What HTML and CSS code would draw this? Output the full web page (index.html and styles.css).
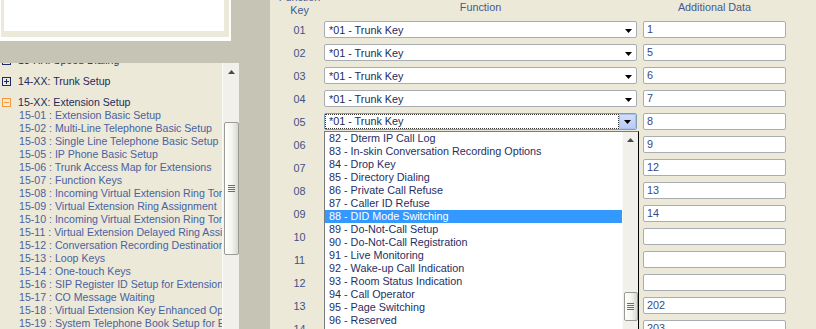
FILE: index.html
```html
<!DOCTYPE html>
<html>
<head>
<meta charset="utf-8">
<link rel="stylesheet" href="styles.css">
</head>
<body>
<div class="page">
  <div class="left">
    <div class="topbox"><div class="topbox-frame"><div class="topbox-inner"></div></div></div>
    <div class="tree">
      <div class="tree-list">
        <div class="tree-head"><svg class="ico" width="9" height="9" viewBox="0 0 9 9"><rect x=".5" y=".5" width="8" height="8" fill="none" stroke="#1c2a6b"/><path d="M2 4.5H7M4.5 2V7" stroke="#1c2a6b"/></svg><span>13-XX: Speed Dialing</span></div>
        <div class="tree-head"><svg class="ico" width="9" height="9" viewBox="0 0 9 9"><rect x=".5" y=".5" width="8" height="8" fill="none" stroke="#1c2a6b"/><path d="M2 4.5H7M4.5 2V7" stroke="#1c2a6b"/></svg><span>14-XX: Trunk Setup</span></div>
        <div class="tree-head"><svg class="ico" width="9" height="9" viewBox="0 0 9 9"><rect x=".5" y=".5" width="8" height="8" fill="none" stroke="#f29a3c"/><path d="M2 4.5H7" stroke="#f29a3c"/></svg><span>15-XX: Extension Setup</span></div>
        <div class="tree-item">15-01 : Extension Basic Setup</div>
        <div class="tree-item">15-02 : Multi-Line Telephone Basic Setup</div>
        <div class="tree-item">15-03 : Single Line Telephone Basic Setup</div>
        <div class="tree-item">15-05 : IP Phone Basic Setup</div>
        <div class="tree-item">15-06 : Trunk Access Map for Extensions</div>
        <div class="tree-item">15-07 : Function Keys</div>
        <div class="tree-item">15-08 : Incoming Virtual Extension Ring Tone Setup</div>
        <div class="tree-item">15-09 : Virtual Extension Ring Assignment</div>
        <div class="tree-item">15-10 : Incoming Virtual Extension Ring Tone Setup for Trunks</div>
        <div class="tree-item">15-11 : Virtual Extension Delayed Ring Assignment</div>
        <div class="tree-item">15-12 : Conversation Recording Destination for DSS</div>
        <div class="tree-item">15-13 : Loop Keys</div>
        <div class="tree-item">15-14 : One-touch Keys</div>
        <div class="tree-item">15-16 : SIP Register ID Setup for Extensions</div>
        <div class="tree-item">15-17 : CO Message Waiting</div>
        <div class="tree-item">15-18 : Virtual Extension Key Enhanced Options</div>
        <div class="tree-item">15-19 : System Telephone Book Setup for Extensions</div>
      </div>
      <div class="vscroll">
        <svg class="up" width="7" height="4" viewBox="0 0 7 4"><path d="M3.5 0L7 4H0Z" fill="#4a4a4a"/></svg>
        <div class="thumb tree-thumb"><div class="grip"><i></i><i></i><i></i><i></i></div></div>
      </div>
    </div>
  </div>

  <div class="main">
    <div class="hdr">
      <div class="key">Function<br>Key</div>
      <div class="fn">Function</div>
      <div class="ad">Additional Data</div>
    </div>

    <div class="row"><div class="key">01</div><div class="sel"><span class="txt">*01 - Trunk Key</span><svg class="arr" width="7" height="4" viewBox="0 0 7 4"><path d="M0 0H7L3.5 4Z" fill="#000"/></svg></div><div class="inp">1</div></div>
    <div class="row"><div class="key">02</div><div class="sel"><span class="txt">*01 - Trunk Key</span><svg class="arr" width="7" height="4" viewBox="0 0 7 4"><path d="M0 0H7L3.5 4Z" fill="#000"/></svg></div><div class="inp">5</div></div>
    <div class="row"><div class="key">03</div><div class="sel"><span class="txt">*01 - Trunk Key</span><svg class="arr" width="7" height="4" viewBox="0 0 7 4"><path d="M0 0H7L3.5 4Z" fill="#000"/></svg></div><div class="inp">6</div></div>
    <div class="row"><div class="key">04</div><div class="sel"><span class="txt">*01 - Trunk Key</span><svg class="arr" width="7" height="4" viewBox="0 0 7 4"><path d="M0 0H7L3.5 4Z" fill="#000"/></svg></div><div class="inp">7</div></div>
    <div class="row"><div class="key">05</div><div class="sel focus"><span class="ftxt">*01 - Trunk Key</span><span class="btn"><svg width="7" height="4" viewBox="0 0 7 4"><path d="M0 0H7L3.5 4Z" fill="#000"/></svg></span></div><div class="inp">8</div></div>
    <div class="row"><div class="key">06</div><div class="sel"></div><div class="inp">9</div></div>
    <div class="row"><div class="key">07</div><div class="sel"></div><div class="inp">12</div></div>
    <div class="row"><div class="key">08</div><div class="sel"></div><div class="inp">13</div></div>
    <div class="row"><div class="key">09</div><div class="sel"></div><div class="inp">14</div></div>
    <div class="row"><div class="key">10</div><div class="sel"></div><div class="inp"></div></div>
    <div class="row"><div class="key">11</div><div class="sel"></div><div class="inp"></div></div>
    <div class="row"><div class="key">12</div><div class="sel"></div><div class="inp"></div></div>
    <div class="row"><div class="key">13</div><div class="sel"></div><div class="inp">202</div></div>
    <div class="row"><div class="key">14</div><div class="sel"></div><div class="inp">203</div></div>

    <div class="dd">
      <div class="dd-list">
        <div class="dd-item">82 - Dterm IP Call Log</div>
        <div class="dd-item">83 - In-skin Conversation Recording Options</div>
        <div class="dd-item">84 - Drop Key</div>
        <div class="dd-item">85 - Directory Dialing</div>
        <div class="dd-item">86 - Private Call Refuse</div>
        <div class="dd-item">87 - Caller ID Refuse</div>
        <div class="dd-item hl">88 - DID Mode Switching</div>
        <div class="dd-item">89 - Do-Not-Call Setup</div>
        <div class="dd-item">90 - Do-Not-Call Registration</div>
        <div class="dd-item">91 - Live Monitoring</div>
        <div class="dd-item">92 - Wake-up Call Indication</div>
        <div class="dd-item">93 - Room Status Indication</div>
        <div class="dd-item">94 - Call Operator</div>
        <div class="dd-item">95 - Page Switching</div>
        <div class="dd-item">96 - Reserved</div>
        <div class="dd-item">97 - Reserved</div>
      </div>
      <div class="vscroll dd-scroll">
        <svg class="up dd-up" width="7" height="4" viewBox="0 0 7 4"><path d="M3.5 0L7 4H0Z" fill="#4a4a4a"/></svg>
        <div class="thumb dd-thumb"><div class="grip"><i></i><i></i><i></i><i></i></div></div>
      </div>
    </div>
  </div>
</div>
</body>
</html>
```
FILE: styles.css
```css
* { box-sizing: border-box; margin: 0; padding: 0; }
html, body { width: 816px; height: 329px; overflow: hidden; }
body { background: #c6c5b5; font-family: "Liberation Sans", Arial, sans-serif; }

.page { display: flex; height: 329px; }

.left { width: 239px; flex: none; display: flex; flex-direction: column; gap: 22px; }
.topbox { width: 231px; height: 41px; flex: none; background: #fff; padding: 0 2px 4px 1px; }
.topbox-frame { height: 37px; background: #ece9d8; padding: 0 5px 6px 3px; }
.topbox-inner { height: 31px; background: #fff; }

.tree { flex: 1; min-height: 0; display: flex; background: #ece9d8; overflow: hidden; }
.tree-list { flex: 1; min-width: 0; overflow: hidden; margin-top: -10px; font-size: 10.6px; }
.tree-head { height: 14px; display: flex; align-items: center; gap: 7px; padding-left: 2px; color: #1f2b5e; white-space: nowrap; }
.tree-head + .tree-head { margin-top: 7px; }
.ico { flex: none; display: block; }
.tree-item { height: 13px; line-height: 13px; padding-left: 19px; color: #4a61a0; white-space: nowrap; }

.vscroll { width: 17px; flex: none; background: #f1f0ea; border-left: 1px solid #fbfbf8; display: flex; flex-direction: column; align-items: center; }
.up { display: block; margin-top: 7px; flex: none; }
.thumb { flex: none; width: 15px; border: 1px solid #9b9b96; border-radius: 2px; background: linear-gradient(to right, #ffffff, #f3f3ef 55%, #d9d8d0); display: flex; align-items: center; justify-content: center; }
.tree-thumb { height: 133px; margin-top: 48px; }
.grip { display: flex; flex-direction: column; gap: 1px; }
.grip i { display: block; width: 7px; height: 1px; background: #6e6e6a; }

.main { flex: none; width: 546px; margin-left: 31px; background: #ece9d8; position: relative; overflow: hidden; font-size: 10.8px; }
.hdr { display: flex; align-items: flex-end; height: 26px; margin-top: -9px; margin-bottom: 4px; line-height: 13px; color: #44598f; }
.hdr .key { width: 54px; padding-left: 5px; text-align: center; }
.hdr .fn { width: 313px; text-align: center; padding-bottom: 3px; }
.hdr .ad { width: 143px; margin-left: 6px; text-align: center; padding-bottom: 3px; }

.row { display: flex; align-items: center; height: 17px; margin-bottom: 6px; }
.row .key { width: 54px; padding-left: 5px; text-align: center; color: #3d5187; }
.sel { width: 313px; height: 17px; border: 1px solid #a7adb3; border-radius: 2px; background: #fff; display: flex; align-items: center; padding-left: 4px; color: #1e2a57; white-space: nowrap; }
.sel .txt { flex: 1; }
.sel .arr { display: block; margin: 2px 4px 0 0; }
.sel.focus { padding: 0; border-color: #7f9db9; }
.ftxt { flex: 1; height: 15px; line-height: 13px; padding-left: 3px; border: 1px dotted #333; }
.btn { width: 17px; height: 15px; flex: none; background: linear-gradient(#d2defb, #b7cbf6); border: 1px solid #a9bfec; border-radius: 1px; display: flex; align-items: center; justify-content: center; }
.btn svg { display: block; margin-top: 1px; }
.inp { width: 143px; height: 17px; margin-left: 6px; border: 1px solid #a7adb3; border-radius: 2px; background: #fff; padding-left: 3px; line-height: 15px; color: #34497f; }

.dd { position: absolute; left: 54px; top: 131px; width: 315px; height: 220px; background: #fff; border: 1px solid #000; border-left-color: #7a7a7a; border-top-color: #7a7a7a; display: flex; }
.dd-list { flex: 1; min-width: 0; overflow: hidden; }
.dd-item { height: 13px; line-height: 13px; padding-left: 4px; color: #1f2f63; white-space: nowrap; }
.dd-item.hl { background: #3399ff; color: #fff; }
.dd-scroll { width: 16px; }
.dd-up { margin-top: 6px; }
.dd-thumb { width: 14px; height: 29px; margin-top: 150px; }
```
